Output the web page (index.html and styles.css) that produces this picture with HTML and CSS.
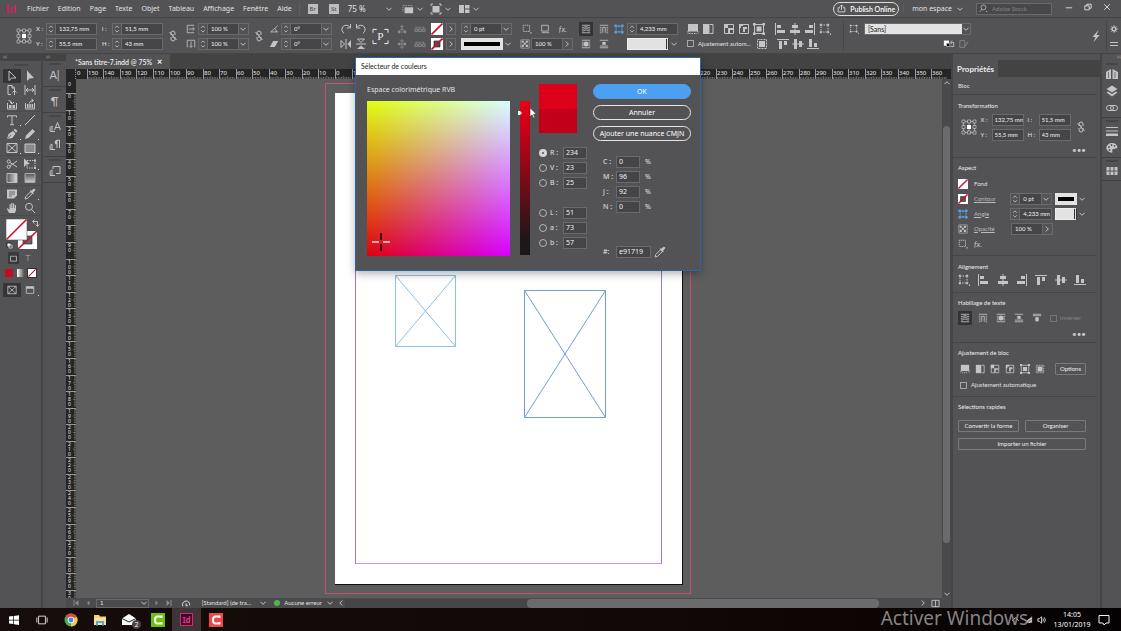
FILE: index.html
```html
<!DOCTYPE html>
<html lang="fr">
<head>
<meta charset="utf-8">
<title>Sans titre-7.indd</title>
<link rel="stylesheet" href="styles.css">
</head>
<body>
<svg class="defs" aria-hidden="true">
  <defs>
    <symbol id="chev" viewBox="0 0 8 8"><path d="M1.5 2.8 4 5.3 6.5 2.8" class="ln"/></symbol>
    <symbol id="gt" viewBox="0 0 8 8"><path d="M2.8 1.5 5.3 4 2.8 6.5" class="ln"/></symbol>
    <symbol id="lt" viewBox="0 0 8 8"><path d="M5.3 1.5 2.8 4 5.3 6.5" class="ln"/></symbol>
    <symbol id="spin" viewBox="0 0 8 12"><path d="M1.8 4.5 4 2.3 6.2 4.5M1.8 7.5 4 9.7 6.2 7.5" class="ln"/></symbol>
    <symbol id="ref" viewBox="0 0 16 16"><path d="M1 1h3v3H1zM6.500 1h3v3h-3zM12 1h3v3h-3zM1 6.500h3v3H1zM12 6.500h3v3h-3zM1 12h3v3H1zM6.500 12h3v3h-3zM12 12h3v3h-3zM4 2.500h2.500M9.500 2.500H12M4 13.500h2.500M9.500 13.500H12M2.500 4v2.500M2.500 9.500V12M13.500 4v2.500M13.500 9.500V12M8 4v2M8 10v2" class="ln thin"/><path d="M6 6h4v4H6z" fill="#fff"/></symbol>
    <symbol id="chain" viewBox="0 0 10 12"><path d="M3 5V3a2 2 0 0 1 4 0v2M3 7v2a2 2 0 0 0 4 0V7M5 4v4M1.500 2l7 8" class="ln"/></symbol>
    <symbol id="scx" viewBox="0 0 12 12"><path d="M2 1.500h8M2 10.500h8M1.500 1v10M3 6h7M8 4l2 2-2 2" class="ln"/></symbol>
    <symbol id="scy" viewBox="0 0 12 12"><path d="M1.500 2v8M10.500 2v8M1 1.500h10M6 3v7M4 8l2 2 2-2" class="ln"/></symbol>
    <symbol id="ang" viewBox="0 0 12 12"><path d="M10.500 2 2 9.500h9M7 5.500q2 1.500 2 4" class="ln"/></symbol>
    <symbol id="shear" viewBox="0 0 12 12"><path d="M5 2.500h6L7 9.500H1z" class="fl"/></symbol>
    <symbol id="cw" viewBox="0 0 12 12"><path d="M4 10.200A4.300 4.300 0 1 1 10 4.500M10.500 1v4H6.800" class="ln"/></symbol>
    <symbol id="ccw" viewBox="0 0 12 12"><path d="M8 10.200A4.300 4.300 0 1 0 2 4.500M1.500 1v4h3.700" class="ln"/></symbol>
    <symbol id="fh" viewBox="0 0 12 12"><path d="M6 1v10M1 2.500v7L4.500 6z" class="ln"/><path d="M11 2v8L7.500 6z" class="fl"/></symbol>
    <symbol id="fv" viewBox="0 0 12 12"><path d="M1 6h10M2.500 1h7L6 4.500z" class="ln"/><path d="M2 11h8L6 7.500z" class="fl"/></symbol>
    <symbol id="pbr" viewBox="0 0 18 18"><path d="M1 5V1.500h4M13 1.500h4V5M17 13v3.500h-4M5 16.500H1V13" class="ln wh"/><text x="5.500" y="13" font-family="Liberation Serif,serif" font-size="12" fill="#eee">P</text></symbol>
    <symbol id="tree" viewBox="0 0 12 12"><path d="M6 1v10M2 9l4-4 4 4M4 3h4" class="ln"/><path d="M1 8h3v3H1zM8 8h3v3H8z" class="fl"/></symbol>
    <symbol id="tree2" viewBox="0 0 12 12"><path d="M6 1v10M2 6h8M3.500 3 6 .8 8.500 3M3.500 9 6 11.200 8.500 9" class="ln"/><path d="M1 4.500h3v3H1zM8 4.500h3v3H8z" class="fl"/></symbol>
    <symbol id="sib" viewBox="0 0 14 12"><path d="M1 6h3v3H1zM5.500 6h3v3h-3zM10 6h3v3h-3zM2.500 3v3M7 3v3M4 4h2M11.500 6V4H9" class="ln"/></symbol>
    <symbol id="none" viewBox="0 0 12 12"><path d="M0 0h12v12H0z" fill="#fff"/><path d="M.5 11.500l11-11" stroke="#c8102e" stroke-width="1.600"/></symbol>
    <symbol id="snone" viewBox="0 0 12 12"><path d="M0 0h12v12H0z" fill="#fff"/><path d="M3 3h6v6H3z" fill="#555" stroke="#111" stroke-width=".6"/><path d="M.5 11.500l11-11" stroke="#c8102e" stroke-width="1.800"/></symbol>
    <symbol id="sqdot" viewBox="0 0 12 12"><path d="M1.500 1.500h7.500v7.500H1.500z" class="ln" stroke-dasharray="1.500 .7"/><path d="M10 10h1.500v1.500H10z" class="fl"/></symbol>
    <symbol id="sq" viewBox="0 0 12 12"><path d="M2 1.500h8v7H2z" class="ln"/><path d="M2 10h9v1H2z" class="fl"/></symbol>
    <symbol id="check" viewBox="0 0 12 12"><path d="M1 1h10v10H1z" class="ln thin"/><path d="M2 2h2.500v2.500H2zM7 2h2.500v2.500H7zM4.500 4.500H7V7H4.500zM2 7h2.500v2.500H2zM7 7h2.500v2.500H7z" class="fl"/></symbol>
    <symbol id="w1" viewBox="0 0 12 12"><path d="M1 1.500h10M1 4h2.500l2.500-1 2.500 1H11M1 6.200h2.500l2.500-1.500 2.500 1.500H11M1 8.300h2.500L6 7l2.500 1.300H11M1 10.500h10" class="ln"/></symbol>
    <symbol id="w2" viewBox="0 0 12 12"><path d="M1 1.500h10M1 4h2M9 4h2M1 6.200h2M9 6.200h2M1 8.300h2M9 8.300h2M1 10.500h2M9 10.500h2M4.500 10.500V4h3v6.500" class="ln"/></symbol>
    <symbol id="w3" viewBox="0 0 12 12"><path d="M1 1.500h10M1 4h2M9 4h2M1 6.200h2M9 6.200h2M1 8.300h2M9 8.300h2M1 10.500h10" class="ln"/><circle cx="6" cy="6" r="3" class="fl"/></symbol>
    <symbol id="w4" viewBox="0 0 12 12"><path d="M1 1.500h10M1 10.500h10M1 8.500h10" class="ln"/><path d="M4 3.500h4V7H4z" class="fl"/></symbol>
    <symbol id="w5" viewBox="0 0 12 12"><path d="M1 1.500h10M1 3.200h10" class="ln"/><path d="M4 5h4v5H4z" class="fl"/></symbol>
    <symbol id="corner" viewBox="0 0 12 12"><path d="M2.500 2.500h7v7h-7z" class="ln"/><path d="M.5.5h3v3h-3zM8.500.5h3v3h-3zM.5 8.500h3v3h-3zM8.500 8.500h3v3h-3zM5 1.500h2v2H5zM5 8.500h2v2H5z" class="fl"/></symbol>
    <symbol id="f1" viewBox="0 0 12 12"><path d="M1 1h10v7.500H1z" class="fl"/><path d="M1 8v3M11 8v3M2 10.500h8" class="ln" stroke-dasharray="1.500 1"/></symbol>
    <symbol id="f2" viewBox="0 0 12 12"><path d="M1 1h6.500v10H1z" class="fl"/><path d="M8 1.500h3v9H8" class="ln"/></symbol>
    <symbol id="f3" viewBox="0 0 12 12"><path d="M1.500 1.500h9v9h-9z" class="ln"/><path d="M1 1h4v4H1zM5 5h5v2H7v3H5z" class="fl"/></symbol>
    <symbol id="f4" viewBox="0 0 12 12"><path d="M1.500 4v6.500h9v-9H5" class="ln"/><path d="M1 1h4v2H3v2H1zM5 4h4v2H7v3H5z" class="fl"/></symbol>
    <symbol id="f5" viewBox="0 0 12 12"><path d="M1.500 1.500h9v9h-9z" class="ln"/><path d="M3.500 3.500h5v5h-5zM0 0h2.500v2.500H0zM9.500 0H12v2.500H9.500zM0 9.500h2.500V12H0zM9.500 9.500H12V12H9.500z" class="fl"/></symbol>
    <symbol id="f6" viewBox="0 0 12 12"><path d="M1.500 1.500h9v9h-9z" class="ln" stroke-dasharray="2 1"/><path d="M3 3h6v6H3z" class="fl"/></symbol>
    <symbol id="al" viewBox="0 0 12 12"><path d="M1.500 0v12" class="ln"/><path d="M3 2h4v3H3zM3 7h8v3H3z" class="fl"/></symbol>
    <symbol id="ac" viewBox="0 0 12 12"><path d="M6 0v12" class="ln"/><path d="M3 2h6v3H3zM1 7h10v3H1z" class="fl"/></symbol>
    <symbol id="ar" viewBox="0 0 12 12"><path d="M10.500 0v12" class="ln"/><path d="M5 2h4v3H5zM1 7h8v3H1z" class="fl"/></symbol>
    <symbol id="at" viewBox="0 0 12 12"><path d="M0 1.500h12" class="ln"/><path d="M2 3h3v8H2zM7 3h3v4H7z" class="fl"/></symbol>
    <symbol id="am" viewBox="0 0 12 12"><path d="M0 6h12" class="ln"/><path d="M2 1h3v10H2zM7 3h3v6H7z" class="fl"/></symbol>
    <symbol id="ab" viewBox="0 0 12 12"><path d="M0 10.500h12" class="ln"/><path d="M2 1h3v8H2zM7 5h3v4H7z" class="fl"/></symbol>
    <symbol id="dist" viewBox="0 0 12 12"><path d="M2 2h7v7H2z" class="ln" stroke-dasharray="1.500 1"/><path d="M.8.8h2v2h-2zM8.200.8h2v2h-2zM.8 8.200h2v2h-2zM8.200 8.200h2v2h-2zM11 10.500h1V12h-1z" class="fl"/></symbol>
    <symbol id="bolt" viewBox="0 0 10 12"><path d="M7.500 0 1.500 7h3L2.500 12 8.700 5H5.500z" class="fl"/></symbol>
    <symbol id="gear" viewBox="0 0 12 12"><circle cx="6" cy="6" r="2.800" fill="none" stroke="currentColor" stroke-width="2.200"/><path d="M6 .5v2M6 9.500v2M.5 6h2M9.500 6h2M2.100 2.100l1.400 1.400M8.500 8.500l1.400 1.400M9.900 2.100 8.500 3.500M3.500 8.500 2.100 9.900" stroke="currentColor" stroke-width="1.500"/></symbol>
    <symbol id="undo" viewBox="0 0 14 12"><path d="M1 2h6v6H1z" fill="#fff"/><path d="M4 5h4v4H4z" fill="#111" stroke="#fff" stroke-width=".6"/><path d="M9 4h3.500v5H9M10.500 2 9 4l1.500 2" class="ln"/></symbol>
    <symbol id="sqpen" viewBox="0 0 12 12"><path d="M7 2H1v8h6zM7 9l4-6" class="ln"/></symbol>
    <symbol id="pen" viewBox="0 0 12 12"><path d="M1 11 2.500 6 7 3l2.500 2.500L6.500 10z" class="fl"/><path d="M7.500 2 9 .7 11.500 3 10 4.800z" class="fl"/><path d="M1.500 10.500 5 7" stroke="#535254" stroke-width=".7"/></symbol>
    <symbol id="pencil" viewBox="0 0 12 12"><path d="M1 11l1-3.500L8.500 1 11 3.500 4.500 10z" class="fl"/></symbol>
    <symbol id="arrow" viewBox="0 0 12 12"><path d="M3 1v9.500l2.600-2.400L10 8z" class="ln"/></symbol>
    <symbol id="arrowf" viewBox="0 0 12 12"><path d="M3 .5V11l2.600-2.600L10 8z" class="fl"/></symbol>
    <symbol id="pagei" viewBox="0 0 12 12"><path d="M2 10.500v-9h4L8.500 4v3M2 10.500h3M6.500 8.500l2-2 2 2M8.500 7v4M6 1.500V4h2.500" class="ln"/></symbol>
    <symbol id="gapi" viewBox="0 0 12 12"><path d="M1 1v10M11 1v10M2 6h8M4 4 2 6l2 2M8 4l2 2-2 2" class="ln"/></symbol>
    <symbol id="coll" viewBox="0 0 12 12"><path d="M1.500 5v6h9V5M2.500 2.500q3 0 3.500 3M4 4l2 2 2-2" class="ln"/><path d="M3 7h2.500v3H3zM6.500 7H9v3H6.500z" class="fl"/></symbol>
    <symbol id="coll2" viewBox="0 0 12 12"><path d="M1.500 5v6h9V5M5 5.500Q6 2.500 9 2.500M7.500.8l2 1.700-2 1.700" class="ln"/><path d="M3 6h1.500v4H3zM5.300 6h1.500v4H5.300zM7.600 6h1.500v4H7.600z" class="fl"/></symbol>
    <symbol id="frame" viewBox="0 0 12 12"><path d="M1 1.500h10v9H1zM1 1.500l10 9M11 1.500l-10 9" class="ln"/></symbol>
    <symbol id="rect" viewBox="0 0 12 12"><path d="M1 2h10v8.500H1z" fill="#8a898b" stroke="#ccc"/></symbol>
    <symbol id="sciss" viewBox="0 0 12 12"><path d="M11 3 4 8M11 9 4 4.500" class="ln" stroke-width="1.500"/><circle cx="2.700" cy="3.500" r="1.600" class="ln"/><circle cx="2.700" cy="8.800" r="1.600" class="ln"/></symbol>
    <symbol id="ftrans" viewBox="0 0 12 12"><path d="M3 2.500h8v7.500H3z" class="ln" stroke-dasharray="1.500 1"/><path d="M0 .5V9l2.500-2.500L6 6zM10 1.500h2v2h-2zM10 9h2v2h-2z" class="fl"/></symbol>
    <symbol id="grad" viewBox="0 0 12 12"><path d="M1 1.500h10v9H1z" fill="url(#gr)" stroke="#bbb"/></symbol>
    <symbol id="feather" viewBox="0 0 12 12"><path d="M1 1.500h10v9H1z" fill="url(#gr2)" stroke="#aaa"/></symbol>
    <symbol id="note" viewBox="0 0 12 12"><path d="M1 1.500h10v6L8 10.500H1z" class="fl"/><path d="M3 4h6M3 6h6M3 8h3" stroke="#535254" stroke-width=".8"/></symbol>
    <symbol id="drop" viewBox="0 0 12 12"><path d="M1 11l.8-2.500L6.500 3.800l1.800 1.800-4.700 4.700z" class="ln"/><path d="M5.800 3 9 6.200l.8-.8-.7-.8 2-2Q11.800.8 9.500.8l-2 2-.8-.7z" class="fl"/></symbol>
    <symbol id="hand" viewBox="0 0 12 12"><path d="M3 11 .8 6.800l1-.6L3.500 8V2.200h1.200V6h.5V1h1.300v5H7V1.600h1.200V6h.6V3H10v5.500L8.800 11z" class="fl"/></symbol>
    <symbol id="mag" viewBox="0 0 12 12"><circle cx="5" cy="4.800" r="3.500" class="ln"/><path d="M7.500 7.500 11 11" class="ln" stroke-width="1.600"/></symbol>
    <symbol id="screen" viewBox="0 0 12 12"><path d="M1.500 2h9v8h-9z" class="ln"/><path d="M1.500 2h9v2.500h-9z" class="fl"/></symbol>
    <symbol id="cc" viewBox="0 0 12 12"><path d="M0 4l5-3v10H0zM6.500 1 12 4v7H6.500z" class="fl"/><path d="M2.500 4v6M9 4v6" stroke="#535254" stroke-width=".7"/></symbol>
    <symbol id="layers" viewBox="0 0 12 12"><path d="M6 .5 11.500 4 6 7.500.5 4zM2 6.500l4 2.500 4-2.500 1.500 1L6 11.500.5 7.500z" class="fl"/></symbol>
    <symbol id="links" viewBox="0 0 12 12"><path d="M3 3.500h2a2.500 2.500 0 0 1 0 5H3a2.500 2.500 0 0 1 0-5zM7 3.500h2a2.500 2.500 0 0 1 0 5H7a2.500 2.500 0 0 1 0-5z" class="ln" stroke-width="1.400"/></symbol>
    <symbol id="bars" viewBox="0 0 12 12"><path d="M0 2.500h12M0 6h12" class="ln"/><path d="M0 8.500h12v2.500H0z" class="fl"/></symbol>
    <symbol id="pal" viewBox="0 0 12 12"><path d="M6 1a5.500 4.800 0 1 0 0 9.800q1-.5.2-2t1.500-1.800 3.800-1Q11 1 6 1z" class="fl"/><g fill="#535254"><circle cx="3" cy="5" r=".9"/><circle cx="5.500" cy="3" r=".9"/><circle cx="8.500" cy="3.800" r=".9"/><circle cx="3.500" cy="8" r=".9"/></g></symbol>
    <symbol id="grid" viewBox="0 0 12 12"><path d="M.5 2h11v8H.5z" class="fl"/><path d="M4 2v8M8 2v8M.5 6h11" stroke="#535254"/></symbol>
    <symbol id="astyle" viewBox="0 0 12 12"><path d="M5.500 9 8.500 1.500 11.500 9M6.500 6.500h4M1 6.500l2-1.500v5.500H1.200zM3 10.500h3" class="ln"/></symbol>
    <symbol id="pstyle" viewBox="0 0 12 12"><path d="M8 1v8M10.500 1v8M7 1.300h4M1 6.500l2-1.500v5.500H1.200zM3 10.500h3" class="ln"/><path d="M8 1a2.200 2.200 0 0 0 0 4.500z" class="fl"/></symbol>
    <symbol id="ostyle" viewBox="0 0 12 12"><path d="M4 4V1.500h7v7H7M1 6.500l2-1.500v5.500H1.200zM3 10.500h3" class="ln"/></symbol>
    <linearGradient id="gr"><stop stop-color="#555"/><stop offset="1" stop-color="#ddd"/></linearGradient>
    <linearGradient id="gr2" x2="0" y2="1"><stop stop-color="#555"/><stop offset="1" stop-color="#ccc"/></linearGradient>
  </defs>
</svg>

<header class="menubar">
  <span class="logo">Id</span>
  <nav class="menus" aria-label="Menu"><a href="#">Fichier</a><a href="#">Edition</a><a href="#">Page</a><a href="#">Texte</a><a href="#">Objet</a><a href="#">Tableau</a><a href="#">Affichage</a><a href="#">Fenêtre</a><a href="#">Aide</a></nav>
  <div class="launch">
    <button class="badge">Br</button><button class="badge">St</button>
    <span class="pick zoom"><select aria-label="Zoom"><option>75 %</option></select><svg class="i8"><use href="#chev"/></svg></span>
    <button class="view" aria-label="Options d'affichage"><svg viewBox="0 0 14 12" class="i12"><path d="M3 4h10v7H3z" class="fl"/><path d="M1 2h12M1 4v6" class="ln" stroke-dasharray="1 1"/></svg><svg class="i8"><use href="#chev"/></svg></button>
    <button class="view" aria-label="Mode d'écran"><svg viewBox="0 0 12 12" class="i12"><path d="M2.500 3h7v6.500h-7z" class="fl"/><path d="M1 3V1h2M9 1h2v2M11 9v2H9M3 11H1V9" class="ln"/></svg><svg class="i8"><use href="#chev"/></svg></button>
    <button class="view" aria-label="Réorganiser"><svg viewBox="0 0 12 12" class="i12"><path d="M1 2h5l0 8H1zM7 2h4.500v3.500H7zM7 6.500h4.500V10H7z" class="fl"/></svg><svg class="i8"><use href="#chev"/></svg></button>
  </div>
  <div class="account">
    <button class="publish"><svg viewBox="0 0 12 12" class="i9"><path d="M1.500 5v5.500h9V5H8M4 5H1.500M6 8V1.500M3.800 3.500 6 1.300l2.200 2.200" class="ln wh"/></svg>Publish Online</button>
    <button class="space">mon espace<svg class="i8"><use href="#chev"/></svg></button>
    <label class="search"><svg viewBox="0 0 12 12" class="i9"><circle cx="6" cy="4.500" r="3.200" class="ln"/><path d="M4 7 1 10.500M9 10h2" class="ln"/></svg><input type="text" placeholder="Adobe Stock" aria-label="Adobe Stock"></label>
    <div class="wctl">
      <button aria-label="Réduire"><svg viewBox="0 0 10 10" class="i8"><path d="M1 6h8" class="ln wh"/></svg></button>
      <button aria-label="Restaurer"><svg viewBox="0 0 10 10" class="i8"><path d="M1 3.500h5.500v5H1zM3.500 3.500v-2H9v5H6.500" class="ln wh"/></svg></button>
      <button aria-label="Fermer"><svg viewBox="0 0 10 10" class="i8"><path d="M1.500 1.500l7 7M8.500 1.500l-7 7" class="ln wh"/></svg></button>
    </div>
  </div>
</header>

<section class="control" aria-label="Contrôle">
  <div class="g mid"><svg class="i16"><use href="#ref"/></svg></div>
  <div class="g c-xy"><label class="r"><span>X :</span><span class="field"><svg class="spin"><use href="#spin"/></svg><input value="132,75 mm"></span></label><label class="r"><span>Y :</span><span class="field"><svg class="spin"><use href="#spin"/></svg><input value="55,5 mm"></span></label></div>
  <div class="g c-xy"><label class="r"><span>l :</span><span class="field"><svg class="spin"><use href="#spin"/></svg><input value="51,5 mm"></span></label><label class="r"><span>H :</span><span class="field"><svg class="spin"><use href="#spin"/></svg><input value="43 mm"></span></label></div>
  <div class="g mid"><svg class="ch"><use href="#chain"/></svg></div>
  <div class="g ind"><div class="r"><svg class="i10"><use href="#scx"/></svg><span class="field f50"><svg class="spin"><use href="#spin"/></svg><input value="100 %" aria-label="Echelle X"><button aria-label="Valeurs"><svg class="i8"><use href="#chev"/></svg></button></span></div><div class="r"><svg class="i10"><use href="#scy"/></svg><span class="field f50"><svg class="spin"><use href="#spin"/></svg><input value="100 %" aria-label="Echelle Y"><button aria-label="Valeurs"><svg class="i8"><use href="#chev"/></svg></button></span></div></div>
  <div class="g mid"><svg class="ch"><use href="#chain"/></svg></div>
  <div class="g"><div class="r"><svg class="i10"><use href="#ang"/></svg><span class="field f50"><svg class="spin"><use href="#spin"/></svg><input value="0°" aria-label="Rotation"><button aria-label="Valeurs"><svg class="i8"><use href="#chev"/></svg></button></span></div><div class="r"><svg class="i10"><use href="#shear"/></svg><span class="field f50"><svg class="spin"><use href="#spin"/></svg><input value="0°" aria-label="Inclinaison"><button aria-label="Valeurs"><svg class="i8"><use href="#chev"/></svg></button></span></div></div>
  <div class="g ind"><div class="r"><svg class="i12"><use href="#cw"/></svg><svg class="i12"><use href="#ccw"/></svg></div><div class="r"><svg class="i12"><use href="#fh"/></svg><svg class="i12"><use href="#fv"/></svg></div></div>
  <div class="g mid"><svg class="i17"><use href="#pbr"/></svg></div>
  <div class="g dim ind"><div class="r"><svg class="i10"><use href="#tree"/></svg><svg class="i12"><use href="#sib"/></svg></div><div class="r"><svg class="i10"><use href="#tree2"/></svg><svg class="i12"><use href="#sib"/></svg></div></div>
  <div class="g"><div class="r"><svg class="i12"><use href="#none"/></svg><button class="mini" aria-label="Fond"><svg class="i8"><use href="#gt"/></svg></button></div><div class="r"><svg class="i12"><use href="#snone"/></svg><button class="mini" aria-label="Contour"><svg class="i8"><use href="#gt"/></svg></button></div></div>
  <div class="g"><div class="r"><span class="field f50"><svg class="spin"><use href="#spin"/></svg><input value="0 pt" aria-label="Epaisseur"><button aria-label="Valeurs"><svg class="i8"><use href="#chev"/></svg></button></span></div><div class="r"><button class="swatch f50" aria-label="Type de contour"><span class="stroke black"></span><svg class="i8"><use href="#chev"/></svg></button></div></div>
  <div class="g ind"><div class="r pad"><svg class="i10"><use href="#sqdot"/></svg><svg class="i10"><use href="#sq"/></svg><i class="fx">fx.</i></div><div class="r"><svg class="i10"><use href="#check"/></svg><span class="field f41"><input value="100 %" aria-label="Opacité"><button aria-label="Valeurs"><svg class="i8"><use href="#gt"/></svg></button></span></div></div>
  <div class="g ind"><div class="r"><svg class="i10 on"><use href="#w1"/></svg><svg class="i10"><use href="#w2"/></svg></div><div class="r"><svg class="i10"><use href="#w3"/></svg><svg class="i10"><use href="#w4"/></svg></div></div>
  <div class="g"><div class="r"><svg class="i10 blue"><use href="#corner"/></svg><span class="field f50"><svg class="spin"><use href="#spin"/></svg><input value="4,233 mm" aria-label="Angle"></span></div><div class="r end"><button class="swatch f50" aria-label="Forme d'angle"><span class="stroke"></span><svg class="i8"><use href="#chev"/></svg></button></div></div>
  <div class="g fit">
    <div class="r"><svg class="i12"><use href="#f1"/></svg><svg class="i12"><use href="#f2"/></svg><svg class="i12 sp"><use href="#f3"/></svg><svg class="i12"><use href="#f4"/></svg><svg class="i12"><use href="#f5"/></svg><svg class="i12 sp"><use href="#al"/></svg><svg class="i12"><use href="#ac"/></svg><svg class="i12"><use href="#ar"/></svg><svg class="i12"><use href="#dist"/></svg></div>
    <div class="r"><label class="tick autofit"><input type="checkbox">Ajustement autom...</label><svg class="i12"><use href="#f6"/></svg><svg class="i12 sp"><use href="#at"/></svg><svg class="i12"><use href="#am"/></svg><svg class="i12"><use href="#ab"/></svg></div>
  </div>
  <div class="g style"><div class="r"><svg class="i10"><use href="#dist"/></svg><span class="pick light"><select aria-label="Style d'objet"><option>[Sans]</option></select><svg class="i8"><use href="#chev"/></svg></span></div><div class="r end"><svg class="i12"><use href="#undo"/></svg><svg class="i10 dimi"><use href="#sqpen"/></svg></div></div>
  <span></span>
  <div class="g mid"><svg class="ch"><use href="#bolt"/></svg></div>
  <div class="g prefs"><div class="r"><svg class="i8"><use href="#gear"/></svg></div><div class="r"><svg class="i8" viewBox="0 0 8 8"><path d="M0 2.500h8M0 5.500h8" class="ln"/></svg></div></div>
</section>

<main class="work">
  <aside class="tools" aria-label="Outils">
    <div class="head">‹‹</div>
    <div class="grip"></div>
    <div class="pair"><button class="act"><svg class="i12"><use href="#arrow"/></svg></button><button><svg class="i12"><use href="#arrowf"/></svg></button>
    <button><svg class="i12"><use href="#pagei"/></svg></button><button><svg class="i12"><use href="#gapi"/></svg></button>
    <button><svg class="i12"><use href="#coll"/></svg></button><button><svg class="i12"><use href="#coll2"/></svg></button></div>
    <div class="pair"><button class="more"><svg viewBox="0 0 12 12" class="i12"><path d="M1.500 3.500V1.800h9v1.700M6 1.800V11M4 10.700h4" class="ln" stroke-width="1.500"/></svg></button><button><svg viewBox="0 0 12 12" class="i12"><path d="M1 11 11 1" class="ln"/></svg></button>
    <button class="more"><svg class="i12"><use href="#pen"/></svg></button><button class="more"><svg class="i12"><use href="#pencil"/></svg></button>
    <button class="more"><svg class="i12"><use href="#frame"/></svg></button><button class="more"><svg class="i12"><use href="#rect"/></svg></button></div>
    <div class="pair"><button><svg class="i12"><use href="#sciss"/></svg></button><button class="more"><svg class="i12"><use href="#ftrans"/></svg></button>
    <button><svg class="i12"><use href="#grad"/></svg></button><button><svg class="i12"><use href="#feather"/></svg></button></div>
    <div class="pair"><button><svg class="i12"><use href="#note"/></svg></button><button class="more"><svg class="i12"><use href="#drop"/></svg></button>
    <button><svg class="i12"><use href="#hand"/></svg></button><button><svg class="i12"><use href="#mag"/></svg></button></div>
    <svg class="fillstroke" viewBox="0 0 36 32"><path d="M13 13h19v18H13z" fill="#fff"/><path d="M18 18h9v8h-9z" fill="#666" stroke="#222" stroke-width=".6"/><path d="M13 31l19-18" stroke="#c8102e" stroke-width="1.600"/><path d="M1 1h21v21H1z" fill="#fff" stroke="#555" stroke-width=".6"/><path d="M1.500 21.500 21.500 1.500" stroke="#c8102e" stroke-width="1.600"/><path d="M28 3.500h4.500V8M29.500 1.500l-2 2 2 2M30.800 6.500l1.700 2 1.700-2" class="ln"/><path d="M2 25h4v4H2z" fill="#fff" stroke="#111" stroke-width=".8"/><path d="M4 27h3v3H4z" class="ln"/></svg>
    <div class="modes"><button class="dk"><svg viewBox="0 0 12 12" class="i9"><path d="M2 3h8v6.500H2z" class="ln"/></svg></button><button class="dimt">T</button></div>
    <div class="chips"><span class="chip red"></span><span class="chip gr"></span><svg class="chip ring"><use href="#none"/></svg></div>
    <div class="pair"><button class="act"><svg class="i10"><use href="#frame"/></svg></button><button class="more"><svg class="i10"><use href="#screen"/></svg></button></div>
  </aside>

  <aside class="dock left" aria-label="Panneaux">
    <div class="head">››</div>
    <div class="cell"><span class="gl">A|</span></div>
    <div class="cell"><span class="gl">¶</span></div>
    <div class="cell"><svg class="i12"><use href="#astyle"/></svg><svg class="i12"><use href="#pstyle"/></svg></div>
    <div class="cell"><svg class="i12"><use href="#ostyle"/></svg></div>
  </aside>

  <section class="doc">
    <div class="tabs"><button class="tab">*Sans titre-7.indd @ 75% <b>×</b></button></div>
    <div class="hrow"><span class="origin"></span><svg class="hruler" id="hruler"></svg></div>
    <div class="body">
      <svg class="vruler" id="vruler"></svg>
      <div class="canvas">
        <svg class="art" viewBox="0 0 866 519">
          <path d="M249.500 4.500h365v510h-365z" fill="none" stroke="#c8506e"/>
          <path d="M259 15h348v491H259z" fill="#111"/>
          <path d="M259 14h347v491H259z" fill="#fff"/>
          <path d="M279.500 34.500h306v450h-306z" fill="none" stroke="#e08fd0"/>
          <path d="M279.500 34v451M585.500 34v451" stroke="#a375cf"/>
          <g fill="none" stroke="#8fc0e6"><path d="M319.500 196.500h60v71h-60zl60 71m0-71-60 71"/></g>
          <g fill="none" stroke="#6f9fd6"><path d="M448.500 211.500h81v127h-81zl81 127m0-127-81 127"/></g>
        </svg>
      </div>
      <div class="vscroll"><svg class="i8"><use href="#chev" transform="rotate(180 4 4)"/></svg><span class="vthumb"></span><svg class="i8"><use href="#chev"/></svg></div>
    </div>
    <footer class="status">
      <div class="pagenav"><svg class="i8" viewBox="0 0 8 8"><path d="M2 1v6" class="ln"/><path d="M6.500 1v6L3 4z" class="fl"/></svg><svg class="i8" viewBox="0 0 8 8"><path d="M5.500 1.500v5L3 4z" class="fl"/></svg>
      <span class="pick pageno"><select aria-label="Page"><option>1</option></select><svg class="i8"><use href="#chev"/></svg></span>
      <svg class="i8" viewBox="0 0 8 8"><path d="M2.500 1.500v5L5 4z" class="fl"/></svg><svg class="i8" viewBox="0 0 8 8"><path d="M6 1v6" class="ln"/><path d="M1.500 1v6L5 4z" class="fl"/></svg></div>
      <svg class="i9 pre" viewBox="0 0 10 10"><path d="M1 8A4 4 0 1 1 8.500 7" class="ln wh"/><path d="M4 4l3 4H4z" class="fl"/></svg>
      <span class="pick prof"><select aria-label="Profil"><option>[Standard] (de tra...</option></select><svg class="i8"><use href="#chev"/></svg></span>
      <span class="led"></span><span class="pick err"><select aria-label="Contrôle en amont"><option>Aucune erreur</option></select><svg class="i8"><use href="#chev"/></svg></span>
      <svg class="i8"><use href="#lt"/></svg>
      <div class="hscroll"><span class="hthumb"></span></div>
      <svg class="i8"><use href="#gt"/></svg>
      <svg class="i9 split" viewBox="0 0 10 10"><path d="M1 1.500h8v7H1zM5 1.500v7" class="ln"/></svg>
    </footer>
  </section>

  <aside class="props" aria-label="Propriétés">
    <div class="ptabs"><button class="ptab">Propriétés</button></div>
    <section class="p bloc">Bloc</section>
    <section class="p trans"><h2>Transformation</h2>
      <div class="tgrid"><svg class="i16"><use href="#ref"/></svg>
        <div class="cols"><label class="r"><span>X :</span><input class="box" value="132,75 mm"></label><label class="r"><span>l :</span><input class="box" value="51,5 mm"></label><label class="r"><span>Y :</span><input class="box" value="55,5 mm"></label><label class="r"><span>H :</span><input class="box" value="43 mm"></label></div>
        <svg class="ch"><use href="#chain"/></svg></div>
      <button class="dots">•••</button>
    </section>
    <section class="p aspect"><h2>Aspect</h2>
      <div class="arow"><svg class="i10"><use href="#none"/></svg><span>Fond</span></div>
      <div class="arow"><svg class="i10"><use href="#snone"/></svg><a href="#">Contour</a><span class="field f41"><svg class="spin"><use href="#spin"/></svg><input value="0 pt" aria-label="Contour"><button aria-label="Valeurs"><svg class="i8"><use href="#chev"/></svg></button></span><button class="swatch f32" aria-label="Type"><span class="stroke black"></span><svg class="i8"><use href="#chev"/></svg></button></div>
      <div class="arow"><svg class="i10 blue"><use href="#corner"/></svg><a href="#">Angle</a><span class="field f41"><svg class="spin"><use href="#spin"/></svg><input value="4,233 mm" aria-label="Angle"></span><button class="swatch f32" aria-label="Forme"><span class="stroke"></span><svg class="i8"><use href="#chev"/></svg></button></div>
      <div class="arow"><svg class="i10"><use href="#check"/></svg><a href="#">Opacité</a><span class="field f41"><input value="100 %" aria-label="Opacité"><button aria-label="Valeurs"><svg class="i8"><use href="#gt"/></svg></button></span></div>
      <div class="arow fxr"><svg class="i10"><use href="#sqdot"/></svg><i class="fx">fx.</i></div>
    </section>
    <section class="p align"><h2>Alignement</h2><div class="icons"><svg class="i12"><use href="#dist"/></svg><svg class="i12"><use href="#al"/></svg><svg class="i12"><use href="#ac"/></svg><svg class="i12"><use href="#ar"/></svg><svg class="i12"><use href="#at"/></svg><svg class="i12"><use href="#am"/></svg><svg class="i12"><use href="#ab"/></svg></div></section>
    <section class="p wrap"><h2>Habillage de texte</h2><div class="icons"><svg class="i10 on"><use href="#w1"/></svg><svg class="i10"><use href="#w2"/></svg><svg class="i10"><use href="#w3"/></svg><svg class="i10"><use href="#w4"/></svg><svg class="i10"><use href="#w5"/></svg><label class="tick off"><input type="checkbox" disabled>Inverser</label></div><button class="dots">•••</button></section>
    <section class="p adj"><h2>Ajustement de bloc</h2><div class="icons"><svg class="i10"><use href="#f1"/></svg><svg class="i10"><use href="#f2"/></svg><svg class="i10"><use href="#f3"/></svg><svg class="i10"><use href="#f4"/></svg><svg class="i10"><use href="#f5"/></svg><svg class="i10"><use href="#f6"/></svg><button class="btn opt">Options</button></div><label class="tick"><input type="checkbox">Ajustement automatique</label></section>
    <section class="p quick"><h2>Sélections rapides</h2><div class="btns"><button class="btn">Convertir la forme</button><button class="btn">Organiser</button><button class="btn wide">Importer un fichier</button></div></section>
  </aside>

  <aside class="dock right" aria-label="Bibliothèques">
    <div class="head">‹‹</div>
    <div class="cell"><svg class="i12"><use href="#cc"/></svg><svg class="i12"><use href="#layers"/></svg><svg class="i12"><use href="#links"/></svg></div>
    <div class="cell"><svg class="i12"><use href="#bars"/></svg><svg class="i12"><use href="#pal"/></svg></div>
    <div class="cell"><svg class="i12"><use href="#grid"/></svg></div>
  </aside>
</main>

<footer class="taskbar">
  <div class="apps">
    <button aria-label="Démarrer"><svg viewBox="0 0 12 12" class="i12"><path d="M1 2.500 5.300 2v3.700H1zM6 1.900 11 1.200v4.500H6zM1 6.400h4.300v3.700L1 9.600zM6 6.400h5V11l-5-.8z" fill="#fff"/></svg></button>
    <button aria-label="Vue des tâches"><svg viewBox="0 0 14 12" class="i12"><path d="M3 1.500h8v9H3zM1 3v6M13 3v6" class="ln wh"/></svg></button>
    <button aria-label="Chrome"><svg viewBox="0 0 14 14" class="i14"><circle cx="7" cy="7" r="6.500" fill="#4caf50"/><path d="M7 7 1.400 3.700A6.500 6.500 0 0 1 12.600 3.700z" fill="#e04a3a"/><path d="M7 7l5.600-3.300A6.500 6.500 0 0 1 7 13.500z" fill="#f6c945"/><circle cx="7" cy="7" r="3.200" fill="#fff"/><circle cx="7" cy="7" r="2.400" fill="#4285f4"/></svg></button>
    <button aria-label="Explorateur"><svg viewBox="0 0 14 14" class="i14"><path d="M1 2h5l1 1.500h6V12H1z" fill="#f2d272"/><path d="M1 5h12v7H1z" fill="#f8e39b"/><path d="M3 8h8v4.500H9V10H5v2.500H3z" fill="#5aa3dc"/></svg></button>
    <button class="mail" aria-label="Courrier"><svg viewBox="0 0 16 14" class="i16"><path d="M1 5.500 8 1l7 4.500V12H1z" fill="#fff"/><path d="M1 5.500 8 9l7-3.500" fill="none" stroke="#222"/></svg><span class="cnt">2</span></button>
    <button aria-label="Camtasia"><svg viewBox="0 0 14 14" class="i14"><path d="M0 0h14v14H0z" fill="#6cc10a"/><path d="M10.500 5V3.500H6.500Q4 3.500 4 7t2.500 3.500h4V9" fill="none" stroke="#fff" stroke-width="2"/></svg></button>
    <button class="cur" aria-label="InDesign"><span class="idico">Id</span></button>
    <button aria-label="Enregistreur"><svg viewBox="0 0 14 14" class="i14"><path d="M0 0h14v14H0z" fill="#ef4747"/><path d="M10.500 5V3.500H6.500Q4 3.500 4 7t2.500 3.500h4V9" fill="none" stroke="#fff" stroke-width="2"/></svg></button>
  </div>
  <div class="tray">
    <svg class="i9" viewBox="0 0 10 10"><path d="M1.500 6.500 5 3l3.500 3.500" class="ln wh"/></svg>
    <svg class="i9" viewBox="0 0 10 10"><path d="M1 9h8V1z" fill="#888"/><path d="M3 9a6 6 0 0 1 6-5M5.500 9A4 4 0 0 1 9 6.500" class="ln wh"/></svg>
    <svg class="i10" viewBox="0 0 12 12"><path d="M1 4.500h2L5.500 2v8L3 7.500H1zM7 4q1.500 2 0 4M8.800 2.800q2.500 3.200 0 6.400" class="ln wh"/></svg>
    <div class="clock"><span>14:05</span><span>13/01/2019</span></div>
    <svg class="i12" viewBox="0 0 12 12"><path d="M1 1.500h10v7.500H8L6 11 5 9H1z" class="ln wh"/></svg>
  </div>
  <span class="mark">Activer Windows</span>
</footer>

<section class="dialog" role="dialog" aria-label="Sélecteur de couleurs">
  <h1>Sélecteur de couleurs</h1>
  <div class="dbody">
    <div class="spectrum"><p>Espace colorimétrique RVB</p>
      <div class="fields"><div class="plane"><svg class="cross" viewBox="0 0 20 20"><path d="M10 1v7M10 12v7" stroke="#111" stroke-width="1.500"/><path d="M1 10h7M12 10h7" stroke="#ddd" stroke-width="1.500"/></svg></div>
      <div class="strip"><svg class="knob" viewBox="0 0 18 8"><path d="M1 2h2l2 2-2 2H1z" fill="#fff"/><path d="M14 4l3-2v4z" fill="#fff"/></svg></div></div></div>
    <div class="rgb"><div class="prev"></div>
      <div class="set"><label><input type="radio" name="c" checked><span>R :</span><input class="box" value="234"></label><label><input type="radio" name="c"><span>V :</span><input class="box" value="23"></label><label><input type="radio" name="c"><span>B :</span><input class="box" value="25"></label></div>
      <div class="set"><label><input type="radio" name="c"><span>L :</span><input class="box" value="51"></label><label><input type="radio" name="c"><span>a :</span><input class="box" value="73"></label><label><input type="radio" name="c"><span>b :</span><input class="box" value="57"></label></div></div>
    <div class="acts"><button class="pill ok">OK</button><button class="pill">Annuler</button><button class="pill">Ajouter une nuance CMJN</button>
      <div class="set cm"><label><span>C :</span><input class="box" value="0">%</label><label><span>M :</span><input class="box" value="96">%</label><label><span>J :</span><input class="box" value="92">%</label><label><span>N :</span><input class="box" value="0">%</label></div>
      <div class="set hexr"><label><span>#:</span><input class="box hex" value="e91719"><svg class="i12"><use href="#drop"/></svg></label></div></div>
  </div>
  <svg class="pointer" viewBox="0 0 9 12"><path d="M1 .8v9l2-2 1.500 3.400 1.400-.6L4.500 7.300h3z" fill="#fff" stroke="#333" stroke-width=".6"/></svg>
</section>
<script src="rulers.js"></script>
</body>
</html>
```
FILE: styles.css
```css
:root{--bg:#535254;--dark:#434344;--line:#454446;--edge:#6a696b;--well:#454447;--ink:#e2e2e2;--icon:#c4c3c5;--narrow:Lato,"Noto Sans",sans-serif}
*{box-sizing:border-box}
body{margin:0;height:100vh;min-height:600px;display:flex;flex-direction:column;overflow:hidden;background:var(--bg);color:var(--ink);font:6px/8px "Noto Sans","Open Sans",sans-serif}
button,input,select{font:inherit;color:inherit;background:none;border:0;padding:0;margin:0;min-width:0;outline:0}
select{appearance:none}
a{color:inherit;text-decoration:none}
h1,h2,p{margin:0;font-size:inherit;font-weight:inherit}
svg{display:block;flex:none;color:var(--icon)}
.defs{position:absolute;width:0;height:0}
.ln{fill:none;stroke:currentColor;stroke-width:1}
.thin{stroke-width:.7}
.wh{stroke:#f2f2f2}
.fl{fill:currentColor}
.i8{width:8px;height:8px}.i9{width:9px;height:9px}.i10{width:10px;height:10px}.i12{width:12px;height:12px}.i14{width:14px;height:14px}.i16{width:16px;height:16px}.i17{width:17px;height:17px}
.ch{width:10px;height:12px}
.blue{color:#5a9fe0}
.on{background:#333;outline:2px solid #333}
.dim svg,.dimi{color:#8d8c8e}
.fx{font-size:8px;color:var(--icon)}

.menubar{height:18px;flex:none;display:flex;align-items:center;padding-left:5px;border-bottom:1px solid var(--line);font-size:7px}
.logo{width:22px;color:#c2265e;font:bold 11px/14px "Noto Sans",sans-serif}
.menus{display:flex;gap:9px}
.launch{display:flex;align-items:center;margin-left:7px;padding-left:8px;border-left:1px solid #5e5d5f}
.badge{width:10px;height:10px;background:#bdbcbe;color:#444;font-size:6px;line-height:10px;margin-right:11px}
.pick{display:flex;align-items:center}
.pick select{flex:1}
.zoom{width:45px;margin:0 9px 0 -2px;font-size:8px}
.view{display:flex;align-items:center;gap:2px;margin-right:6px}
.account{margin-left:auto;display:flex;align-items:center}
.publish{display:flex;align-items:center;justify-content:center;gap:4px;width:66px;height:14px;border:1px solid #ddd;border-radius:7px;color:#fff;font-family:var(--narrow);font-weight:600}
.space{display:flex;align-items:center;gap:4px;margin-left:4px;padding:0 12px 0 8px;border-left:1px solid #5e5d5f}
.search{display:flex;align-items:center;gap:4px;width:76px;height:12px;border:1px solid var(--edge);background:#48474a;padding-left:2px;font-size:6px}
.search input{flex:1}
.search input::placeholder{color:#858486;opacity:1}
.wctl{display:flex;gap:11px;padding:0 10px 3px 13px}

.control{height:36px;flex:none;display:grid;grid-template-columns:15px 61px 61px 10px 66px 10px 63px 30px 17px 32px 25px 51px 56px 31px 64px 155px 128px 1fr 10px 15px;column-gap:5px;padding:3px 0 2px 16px;border-bottom:1px solid var(--line);font-family:var(--narrow)}
.g{display:flex;flex-direction:column;min-width:0}
.mid{align-items:center;justify-content:center}
.ind{padding-left:3px}
.r{display:flex;align-items:center;justify-content:space-between;height:15px}
.end{justify-content:flex-end}
.pad{padding:0 6px 0 2px}
.c-xy .field{width:51px}
.field{display:flex;height:12px;border:1px solid var(--edge);background:var(--well);color:#f2f2f2}
.field input{flex:1;width:0;padding-left:3px}
.field .spin{width:9px;height:10px;border-right:1px solid var(--edge);background:var(--bg)}
.field button{width:10px;border-left:1px solid var(--edge);background:var(--bg)}
.f50{width:51px}.f41{width:42px}.f32{width:32px}
.mini{width:10px;height:12px;border:1px solid var(--edge)}
.swatch{display:flex;align-items:center;height:12px;gap:1px}
.stroke{flex:1;height:12px;background:#e3e2e2;border:1px solid #eee}
.stroke.black{background:#000;border:solid #e3e2e2;border-width:4px 3px}
.stroke:not(.black){border-right:3px double #333}
.fit .r{justify-content:flex-start;gap:3px;padding-left:4px}
.sp{margin-left:6px}
.tick{display:flex;align-items:center;gap:4px;white-space:nowrap}
.tick input{appearance:none;width:7px;height:7px;border:1px solid #a5a4a6}
.autofit{width:66px}
.off{color:#858486}
.off input{border-color:#757476}
.style{border-left:1px solid var(--line);padding-left:5px}
.style .end{gap:4px;padding-right:2px}
.light{width:107px;height:12px;border:1px solid var(--edge)}
.light select{height:10px;background:#e4e3e3;color:#222;padding-left:3px;font-size:7px}
.prefs{border-left:1px solid var(--line);align-items:center}

.work{flex:1;display:flex;min-height:0;font-family:var(--narrow)}
.head{height:7px;background:var(--dark);font-size:7px;line-height:5px;padding-left:3px;color:#bbb}
.tools{width:43px;border-right:2px solid var(--line)}
.grip{height:7px;width:14px;margin:0 auto;background:linear-gradient(#464547,#464547) center/100% 2px no-repeat}
.pair{display:grid;grid-template-columns:18px 18px;padding:1px 3px 0;border-bottom:1px solid #4b4a4c}
.pair:last-child{border:0;margin-top:2px}
.pair button{height:14px;display:grid;place-items:center;position:relative}
.pair .act{background:#353436}
.more::after{content:"";position:absolute;right:0;bottom:1px;width:1px;height:1px;background:#ddd}
.fillstroke{width:36px;height:32px;margin:2px 0 0 5px}
.modes{display:flex;gap:4px;padding:2px 8px 0;height:15px}
.modes button{width:12px;height:12px;display:grid;place-items:center;font-size:8px}
.dk{background:#3a393b}
.dimt{color:#9b9a9c}
.chips{display:flex;gap:4px;padding:4px 5px 3px;height:15px}
.chip{width:8px;height:8px}
.red{background:#c90a20}
.gr{background:linear-gradient(90deg,#fff,#555)}
.ring{outline:1px solid #333}
.dock{width:23px;flex:none}
.dock .cell{display:flex;flex-direction:column;align-items:center;gap:5px;padding:8px 0 5px;border-bottom:1px solid #403f41;background:linear-gradient(#464547,#464547) center 2px/12px 2px no-repeat}
.left .cell{gap:6px}
.left .cell:first-of-type{padding-top:7px}
.gl{font-size:11px;line-height:12px;color:var(--icon)}
.right{width:21px;border-left:2px solid var(--line)}
.right .head{background:var(--bg);text-align:right}
.right .cell{padding:7px 0 3px}

.doc{flex:1;min-width:0;display:flex;flex-direction:column}
.tabs{height:15px;background:var(--dark);display:flex}
.tab{background:var(--bg);padding:0 8px 0 9px;font-size:7px;font-weight:600;color:#eee}
.tab b{font-size:9px;margin-left:3px}
.hrow{display:flex;height:10px;background:#252525}
.origin{width:10px;border-right:1px dotted #888}
.hruler{flex:1;width:0;height:10px}
.hruler text,.vruler text{font:6px "Noto Sans",sans-serif;fill:#e8e8e8}
.vruler text{font-size:5px}
.body{flex:1;min-height:0;display:flex}
.vruler{width:10px;height:100%;background:#252525}
.canvas{flex:1;min-width:0;background:#5d5d5d;overflow:hidden}
.art{width:866px;height:519px}
.vscroll{width:9px;display:flex;flex-direction:column;align-items:center;background:#4a494b}
.vthumb{width:7px;flex:1;margin:39px 0 47px;border-radius:4px;background:#6b6a6c}
.status{height:10px;display:flex;align-items:center;background:#4b4a4c}
.pagenav{display:flex;align-items:center;gap:4px;width:110px;padding-left:6px}
.pageno{width:53px;height:9px;border:1px solid var(--edge);padding-left:3px}
.pagenav > svg{color:#8a898b}
.pre{margin:0 11px 0 6px}
.prof{width:66px}
.led{width:6px;height:6px;border-radius:3px;background:#4cb848;margin:0 4px 0 7px}
.err{width:50px;margin-right:3px}
.hscroll{flex:1;height:9px;background:#454446;padding-left:182px;margin-right:40px}
.hthumb{display:block;width:352px;max-width:100%;height:9px;border-radius:4px;background:#6b6a6c}
.split{margin:0 11px 0 4px}

.props{width:149px;flex:none;border-left:2px solid var(--line)}
.ptabs{margin-top:6px;height:17px;background:var(--dark)}
.ptab{width:45px;height:17px;background:var(--bg);font-size:8px;font-weight:700;color:#eee}
.props h2{color:#eee}
.p{padding:0 10px 0 5px;margin-right:4px;border-bottom:1px solid #464547}
.bloc{height:18px;line-height:18px}
.trans{height:63px;padding-top:7px}
.tgrid{display:flex;align-items:center;padding:2px 0 0 3px;justify-content:space-between}
.cols{display:grid;grid-template-columns:43px 43px;gap:0 4px}
.cols .r span{width:11px}
.box{border:1px solid var(--edge);background:var(--well);height:12px;width:32px;padding-left:2px;color:#f2f2f2}
.tgrid .ch{margin-left:2px}
.dots{display:block;margin:4px 0 0 auto;color:#ccc;font-size:8px}
.aspect{height:98px;padding-top:6px}
.arow{display:flex;align-items:center;height:15px}
.arow a,.arow > span:nth-child(2){width:43px;padding-left:6px}
.arow a{text-decoration:underline;color:#bbb}
.arow .field{margin-right:3px}
.aspect h2{padding-bottom:4px}
.fxr{gap:6px}
.align{height:37px;padding-top:7px}
.icons{display:flex;align-items:center;justify-content:space-between;padding-top:2px;height:16px}
.wrap{height:50px;padding-top:6px}
.wrap .icons{justify-content:flex-start;gap:8px;padding:4px 0 0 2px;height:18px}
.wrap .tick{gap:3px}
.wrap .dots{margin-top:5px}
.adj{height:54px;padding-top:6px}
.adj .icons{justify-content:flex-start;gap:5px;padding:3px 0 0 2px;height:20px}
.adj > .tick{padding:4px 0 0 2px}
.btn{height:12px;border:1px solid #7a797b;border-radius:1px;color:#f0f0f0}
.opt{width:38px;margin-left:5px}
.quick{border:0;padding-top:6px}
.btns{display:grid;grid-template-columns:1fr 1fr;gap:6px;padding-top:9px}
.wide{grid-column:span 2}

.taskbar{height:23px;flex:none;display:flex;justify-content:space-between;background:linear-gradient(90deg,#160c0b,#120805 60%,#060203);position:relative}
.apps{display:flex}
.apps button{width:29px;display:grid;place-items:center;position:relative}
.apps button:first-child{width:27px}
.apps .cur{background:#3d3436}
.idico{width:13px;height:13px;border:1px solid #d6257f;background:#3b0a22;color:#e6348e;font:bold 8px/11px "Noto Sans",sans-serif}
.cnt{position:absolute;right:2px;bottom:2px;width:9px;height:9px;border-radius:5px;background:#444;color:#fff;font-size:7px;line-height:9px}
.tray{display:flex;align-items:center;gap:4px;padding-right:11px}
.clock{display:flex;flex-direction:column;align-items:center;width:42px;font-size:7px;line-height:10px;color:#fff;margin-right:1px}
.mark{position:absolute;right:93px;top:0;font-size:19px;line-height:20px;color:#858385}

.dialog{position:absolute;left:355px;top:57px;width:346px;border:1px solid #2c66a6;background:var(--bg);box-shadow:0 3px 8px rgba(0,0,0,.3);font-size:7px}
.dialog h1{height:17px;line-height:17px;padding-left:5px;background:#fff;color:#222;font-family:var(--narrow)}
.dbody{display:flex;padding:9px 9px 11px 11px}
.spectrum{width:172px}
.spectrum p{height:17px;line-height:12px;white-space:nowrap}
.fields{display:flex;gap:10px}
.plane{width:143px;height:155px;position:relative;background-image:linear-gradient(90deg,#de0010,#d800ff),linear-gradient(0deg,#000,#0f0);background-blend-mode:screen}
.cross{position:absolute;left:4px;bottom:4px;width:20px;height:20px}
.strip{width:10px;height:154px;position:relative;background:linear-gradient(#ea0018,#d00018 15%,#1c1718 90%)}
.knob{position:absolute;left:-3px;top:8px;width:18px;height:8px}
.rgb{width:48px;margin-right:6px}
.prev{width:38px;height:49px;background:linear-gradient(#dc0018 50%,#c20019 50%);margin-bottom:12px}
.set label{display:flex;align-items:center;height:15px}
.rgb .set + .set{margin-top:15px}
.set input[type=radio]{appearance:none;width:8px;height:8px;border:1px solid #b5b4b6;border-radius:4px;margin-right:3px}
.set input[type=radio]:checked{border:3px solid #d5d4d6}
.set span{width:13px}
.set .box{width:24px}
.acts{flex:1}
.pill{display:block;width:100%;height:15px;border:1px solid #e5e5e5;border-radius:8px;margin-bottom:6px;color:#fff;white-space:nowrap}
.pill.ok{background:#4ba0f2;border-color:#4ba0f2}
.cm{padding:7px 0 0 10px}
.cm .box{margin-right:5px}
.hexr{padding:30px 0 0 10px}
.set .hex{width:35px;margin-right:3px}
.pointer{position:absolute;left:173px;top:49px;width:9px;height:12px}
```
FILE: rulers.js
```js
// One ruler division (10 mm) at 75 % zoom, in pixels.
const STEP = 16.56;
const NS = 'http://www.w3.org/2000/svg';

function add(svg, name, attrs, text) {
  const el = document.createElementNS(NS, name);
  for (const key in attrs) el.setAttribute(key, attrs[key]);
  if (text !== undefined) el.textContent = text;
  svg.appendChild(el);
}

function horizontal(svg, zero) {
  let minor = '';
  add(svg, 'text', { x: 1, y: 6 }, '0');
  for (let n = -15; n <= 36; n++) {
    const x = zero + n * STEP;
    add(svg, 'path', { d: `M${Math.round(x) + 0.5} 0V10`, stroke: '#999' });
    add(svg, 'text', { x: Math.round(x) + 1, y: 6 }, Math.abs(n * 10));
    for (let k = 1; k < 10; k++) minor += `M${x + k * STEP / 10} ${k === 5 ? 7 : 8}V10`;
  }
  add(svg, 'path', { d: minor, stroke: '#888', 'stroke-width': 0.7 });
}

function vertical(svg, zero) {
  let minor = '';
  add(svg, 'text', { x: 2, y: 7 }, '0');
  for (let n = 0; n <= 30; n++) {
    const y = zero + n * STEP;
    add(svg, 'path', { d: `M0 ${Math.round(y) + 0.5}H10`, stroke: '#999' });
    String(n * 10).split('').forEach((digit, i) => {
      add(svg, 'text', { x: 2, y: Math.round(y) + 5 + i * 5 }, digit);
    });
    for (let k = 1; k < 10; k++) minor += `M${k === 5 ? 7 : 8} ${y + k * STEP / 10}H10`;
  }
  add(svg, 'path', { d: minor, stroke: '#888', 'stroke-width': 0.7 });
}

horizontal(document.getElementById('hruler'), 259);
vertical(document.getElementById('vruler'), 14);
```
